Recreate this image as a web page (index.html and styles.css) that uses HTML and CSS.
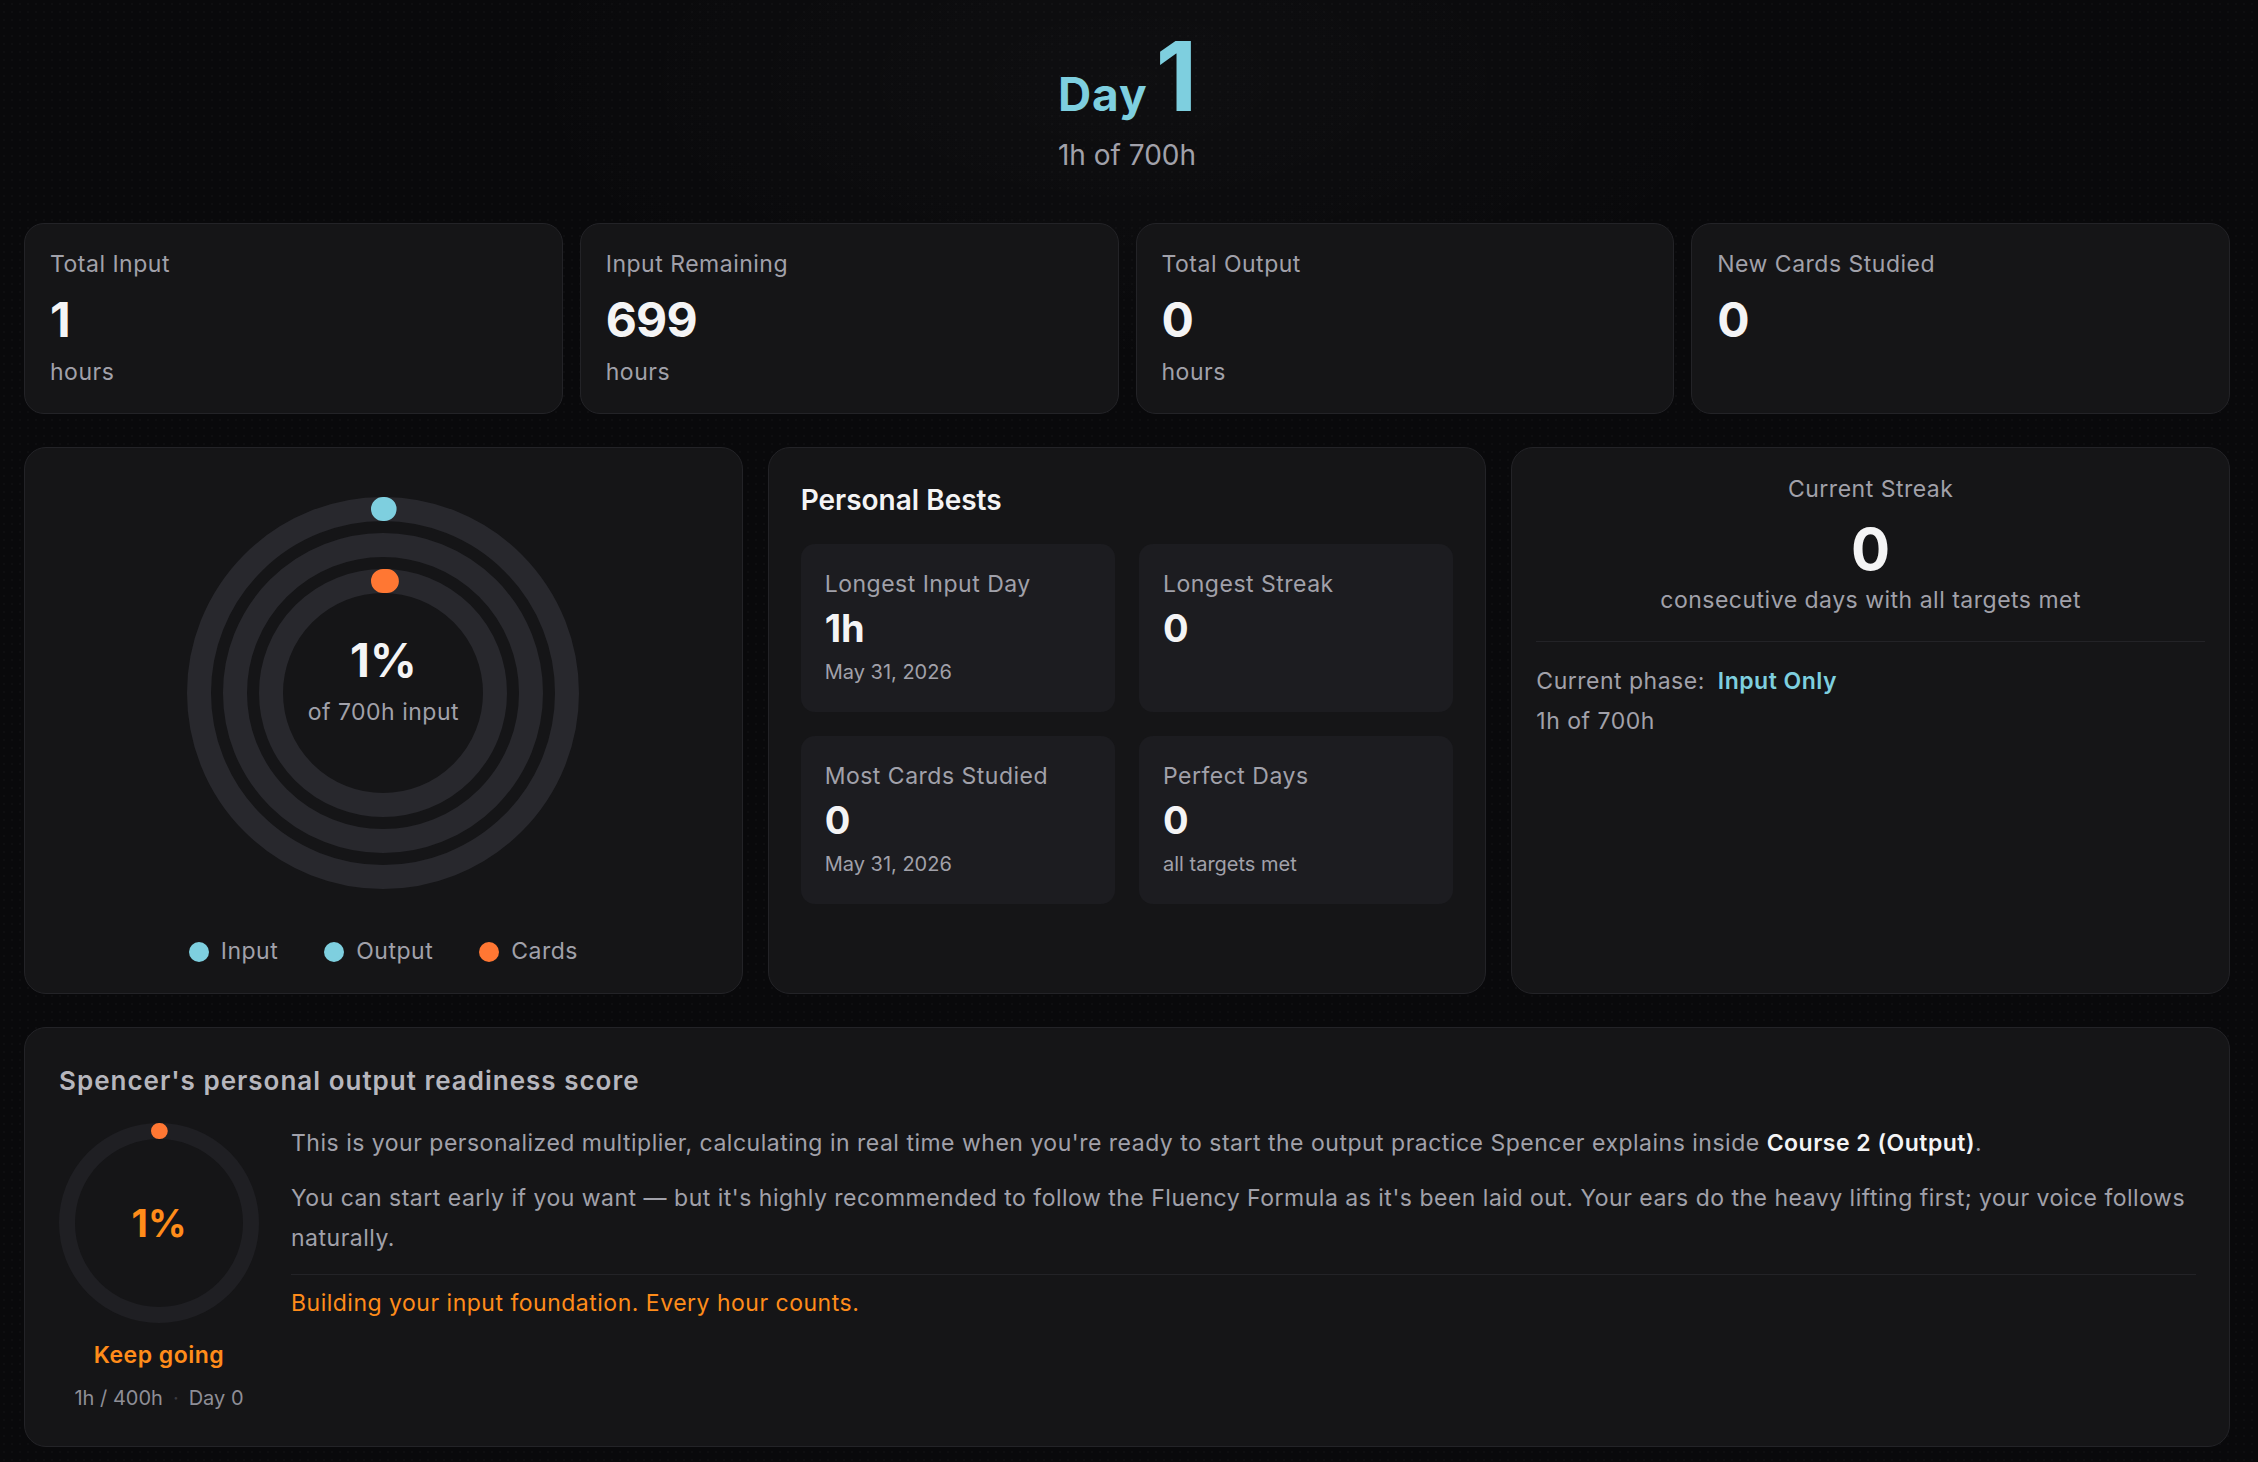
FILE: index.html
```html
<!DOCTYPE html>
<html lang="en">
<head>
<meta charset="utf-8">
<title>Dashboard</title>
<link rel="stylesheet" href="styles.css">
</head>
<body>
<main class="page">
  <header class="hero">
    <div class="hero-title"><span class="hero-day">Day</span><span class="hero-num">1</span></div>
    <div class="hero-sub">1h of 700h</div>
  </header>

  <section class="stats-row">
    <div class="card stat-card">
      <div class="stat-label">Total Input</div>
      <div class="stat-value">1</div>
      <div class="stat-unit">hours</div>
    </div>
    <div class="card stat-card">
      <div class="stat-label">Input Remaining</div>
      <div class="stat-value">699</div>
      <div class="stat-unit">hours</div>
    </div>
    <div class="card stat-card">
      <div class="stat-label">Total Output</div>
      <div class="stat-value">0</div>
      <div class="stat-unit">hours</div>
    </div>
    <div class="card stat-card">
      <div class="stat-label">New Cards Studied</div>
      <div class="stat-value">0</div>
    </div>
  </section>

  <section class="mid-row">
    <div class="card ring-card">
      <div class="ring-stack">
        <svg class="rings" viewBox="0 0 400 400" width="400" height="400">
          <circle class="track" cx="200" cy="200" r="184"></circle>
          <circle class="track" cx="200" cy="200" r="148"></circle>
          <circle class="track" cx="200" cy="200" r="112"></circle>
          <circle class="arc arc-input" cx="200" cy="200" r="184" transform="rotate(-90 200 200)"></circle>
          <circle class="arc arc-cards" cx="200" cy="200" r="112" transform="rotate(-90 200 200)"></circle>
        </svg>
        <div class="ring-center">
          <div class="ring-pct">1%</div>
          <div class="ring-sub">of 700h input</div>
        </div>
      </div>
      <div class="legend">
        <span class="legend-item"><span class="dot dot-cyan"></span>Input</span>
        <span class="legend-item"><span class="dot dot-cyan"></span>Output</span>
        <span class="legend-item"><span class="dot dot-orange"></span>Cards</span>
      </div>
    </div>

    <div class="card bests-card">
      <h2 class="bests-title">Personal Bests</h2>
      <div class="bests-grid">
        <div class="best">
          <div class="best-label">Longest Input Day</div>
          <div class="best-value">1h</div>
          <div class="best-sub">May 31, 2026</div>
        </div>
        <div class="best">
          <div class="best-label">Longest Streak</div>
          <div class="best-value">0</div>
        </div>
        <div class="best">
          <div class="best-label">Most Cards Studied</div>
          <div class="best-value">0</div>
          <div class="best-sub">May 31, 2026</div>
        </div>
        <div class="best">
          <div class="best-label">Perfect Days</div>
          <div class="best-value">0</div>
          <div class="best-sub">all targets met</div>
        </div>
      </div>
    </div>

    <div class="card streak-card">
      <div class="streak-top">
        <div class="streak-label">Current Streak</div>
        <div class="streak-value">0</div>
        <div class="streak-sub">consecutive days with all targets met</div>
      </div>
      <div class="phase">
        <div class="phase-line">Current phase: <span class="phase-name">Input Only</span></div>
        <div class="phase-hours">1h of 700h</div>
      </div>
    </div>
  </section>

  <section class="card ready-card">
    <h2 class="ready-title">Spencer's personal output readiness score</h2>
    <div class="ready-body">
      <div class="ready-left">
        <div class="ready-stack">
          <svg class="ready-ring" viewBox="0 0 200 200" width="200" height="200">
            <circle class="ready-track" cx="100" cy="100" r="92"></circle>
            <circle class="ready-arc" cx="100" cy="100" r="92" transform="rotate(-90 100 100)"></circle>
          </svg>
          <div class="ready-pct">1%</div>
        </div>
        <div class="ready-status">Keep going</div>
        <div class="ready-meta"><span>1h / 400h</span><span class="sep">·</span><span>Day 0</span></div>
      </div>
      <div class="ready-text">
        <p class="ready-p">This is your personalized multiplier, calculating in real time when you're ready to start the output practice Spencer explains inside <strong>Course 2 (Output)</strong>.</p>
        <p class="ready-p">You can start early if you want — but it's highly recommended to follow the Fluency Formula as it's been laid out. Your ears do the heavy lifting first; your voice follows naturally.</p>
        <div class="ready-note">Building your input foundation. Every hour counts.</div>
      </div>
    </div>
  </section>
</main>
</body>
</html>
```

FILE: styles.css
```css
* { box-sizing: border-box; }

html, body {
  margin: 0;
  padding: 0;
  background: #09090b;
}

body {
  font-family: "Inter", "Noto Sans", "Liberation Sans", sans-serif;
  color: #f4f4f5;
  min-height: 100vh;
  background-color: #09090b;
  background-image:
    radial-gradient(ellipse 900px 420px at 50% 80px, rgba(255,255,255,0.022), rgba(255,255,255,0) 70%),
    radial-gradient(rgba(255,255,255,0.018) 1px, transparent 1.2px);
  background-size: 100% 100%, 8px 8px;
}

.page {
  padding: 28px 28px 24px 24px;
}

/* shared body text */
.stat-label, .stat-unit, .ring-sub, .legend, .best-label,
.streak-label, .streak-sub, .phase, .ready-p, .ready-note, .ready-status {
  font-size: 23px;
  letter-spacing: 0.5px;
}

/* Hero */
.hero {
  text-align: center;
  margin-bottom: 47px;
}
.hero-title {
  display: inline-flex;
  align-items: baseline;
  gap: 8px;
  color: #7ecfdf;
  font-weight: 700;
}
.hero-day {
  font-size: 46px;
  line-height: 1;
  letter-spacing: 1px;
}
.hero-num {
  font-size: 96px;
  line-height: 1;
  letter-spacing: -1px;
}
.hero-sub {
  margin-top: 10px;
  font-size: 28px;
  line-height: 42px;
  color: #a1a1aa;
}

/* Cards */
.card {
  background: #151517;
  border: 1px solid #232327;
}

.stats-row {
  display: grid;
  grid-template-columns: repeat(4, 1fr);
  gap: 17px;
  margin-bottom: 33px;
}
.stat-card {
  border-radius: 20px;
  padding: 24px 25px;
}
.stat-label {
  line-height: 33px;
  color: #a1a1aa;
}
.stat-value {
  margin-top: 15px;
  font-size: 48px;
  line-height: 48px;
  font-weight: 700;
  letter-spacing: -0.8px;
  color: #f4f4f5;
}
.stat-unit {
  margin-top: 12px;
  line-height: 33px;
  color: #a1a1aa;
}

.mid-row {
  display: grid;
  grid-template-columns: repeat(3, 1fr);
  gap: 25px;
  margin-bottom: 33px;
}

/* Ring card */
.ring-card {
  border-radius: 22px;
  padding: 45px 24px 25px;
  display: flex;
  flex-direction: column;
  align-items: center;
}
.ring-stack {
  display: grid;
  width: 400px;
  height: 400px;
}
.rings, .ring-center {
  grid-area: 1 / 1;
}
.rings { display: block; }
.track {
  fill: none;
  stroke: #28282d;
  stroke-width: 24;
}
.arc {
  fill: none;
  stroke-width: 24;
  stroke-linecap: round;
}
.arc-input {
  stroke: #7ecfdf;
  stroke-dasharray: 1.6 2000;
}
.arc-cards {
  stroke: #ff7733;
  stroke-dasharray: 4 2000;
}
.ring-center {
  align-self: start;
  margin-top: 142px;
  text-align: center;
}
.ring-pct {
  font-size: 46px;
  line-height: 50px;
  font-weight: 700;
  color: #f4f4f5;
}
.ring-sub {
  margin-top: 11px;
  line-height: 33px;
  color: #a1a1aa;
}
.legend {
  margin-top: 42px;
  display: flex;
  gap: 46px;
  line-height: 33px;
  color: #a1a1aa;
}
.legend-item {
  display: inline-flex;
  align-items: center;
  gap: 12px;
}
.dot {
  width: 20px;
  height: 20px;
  border-radius: 50%;
  display: inline-block;
}
.dot-cyan { background: #7ecfdf; }
.dot-orange { background: #ff7733; }

/* Personal bests */
.bests-card {
  border-radius: 22px;
  padding: 32px;
}
.bests-title {
  margin: 0 0 24px;
  font-size: 28px;
  line-height: 40px;
  font-weight: 600;
  color: #f4f4f5;
}
.bests-grid {
  display: grid;
  grid-template-columns: 1fr 1fr;
  gap: 24px;
}
.best {
  background: #1c1c20;
  border-radius: 14px;
  padding: 24px;
  min-height: 168px;
}
.best-label {
  line-height: 33px;
  color: #a1a1aa;
}
.best-value {
  margin-top: 4px;
  font-size: 38px;
  line-height: 46px;
  font-weight: 700;
  color: #f4f4f5;
}
.best-sub {
  margin-top: 6px;
  font-size: 20px;
  line-height: 30px;
  color: #a1a1aa;
}

/* Streak card */
.streak-card {
  border-radius: 22px;
  padding: 24px;
}
.streak-top {
  text-align: center;
  padding-bottom: 24px;
  border-bottom: 1px solid #232327;
}
.streak-label {
  line-height: 34px;
  color: #a1a1aa;
}
.streak-value {
  margin-top: 14px;
  font-size: 58px;
  line-height: 58px;
  font-weight: 700;
  color: #f4f4f5;
}
.streak-sub {
  margin-top: 5px;
  line-height: 34px;
  color: #a1a1aa;
}
.phase {
  padding-top: 22px;
  line-height: 34px;
  color: #a1a1aa;
}
.phase-name {
  margin-left: 6px;
  color: #7ecfdf;
  font-weight: 600;
}
.phase-hours {
  margin-top: 6px;
}

/* Readiness */
.ready-card {
  border-radius: 22px;
  padding: 33px 33px 33px 34px;
}
.ready-title {
  margin: 0 0 23px;
  font-size: 26px;
  line-height: 39px;
  font-weight: 600;
  letter-spacing: 1px;
  color: #b6b6bd;
}
.ready-body {
  display: flex;
  gap: 32px;
  align-items: flex-start;
}
.ready-left {
  flex: 0 0 200px;
  display: flex;
  flex-direction: column;
  align-items: center;
}
.ready-stack {
  display: grid;
  width: 200px;
  height: 200px;
}
.ready-ring, .ready-pct {
  grid-area: 1 / 1;
}
.ready-ring { display: block; }
.ready-track {
  fill: none;
  stroke: #1f1f23;
  stroke-width: 16;
}
.ready-arc {
  fill: none;
  stroke: #ff7733;
  stroke-width: 16;
  stroke-linecap: round;
  stroke-dasharray: 0.8 2000;
}
.ready-pct {
  align-self: center;
  justify-self: center;
  font-size: 38px;
  line-height: 46px;
  font-weight: 700;
  color: #ff8c1a;
}
.ready-status {
  margin-top: 15px;
  line-height: 34px;
  font-weight: 600;
  color: #ff8c1a;
}
.ready-meta {
  margin-top: 11px;
  font-size: 20px;
  line-height: 30px;
  color: #8e8e96;
  display: flex;
  gap: 10px;
}
.ready-meta .sep {
  color: #3a3a40;
}
.ready-text {
  flex: 1;
  min-width: 0;
}
.ready-p {
  margin: 0 0 15px;
  line-height: 40px;
  color: #a1a1aa;
}
.ready-p:last-of-type {
  margin-bottom: 0;
}
.ready-p strong {
  color: #f4f4f5;
  font-weight: 600;
}
.ready-note {
  margin-top: 16px;
  padding-top: 8px;
  border-top: 1px solid #232327;
  line-height: 40px;
  color: #ff8c1a;
}
```
